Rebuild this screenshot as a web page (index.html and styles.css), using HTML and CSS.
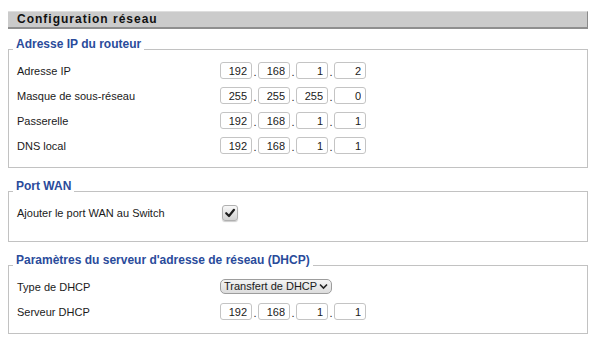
FILE: index.html
```html
<!DOCTYPE html>
<html lang="fr">
  <head>
    <meta charset="UTF-8" />
    <meta name="viewport" content="width=device-width, initial-scale=1.0" />
    <title>Configuration réseau</title>
    <link rel="stylesheet" href="styles.css">
  </head>
  <body>
    <main class="page">
      <h1 class="title">Configuration réseau</h1>

      <fieldset class="group">
        <legend>Adresse IP du routeur</legend>
        <div class="row">
          <label>Adresse IP</label>
          <div class="ip">
            <input type="text" value="192" /><span>.</span><input type="text" value="168" /><span>.</span><input type="text" value="1" /><span>.</span><input type="text" value="2" />
          </div>
        </div>
        <div class="row">
          <label>Masque de sous-réseau</label>
          <div class="ip">
            <input type="text" value="255" /><span>.</span><input type="text" value="255" /><span>.</span><input type="text" value="255" /><span>.</span><input type="text" value="0" />
          </div>
        </div>
        <div class="row">
          <label>Passerelle</label>
          <div class="ip">
            <input type="text" value="192" /><span>.</span><input type="text" value="168" /><span>.</span><input type="text" value="1" /><span>.</span><input type="text" value="1" />
          </div>
        </div>
        <div class="row">
          <label>DNS local</label>
          <div class="ip">
            <input type="text" value="192" /><span>.</span><input type="text" value="168" /><span>.</span><input type="text" value="1" /><span>.</span><input type="text" value="1" />
          </div>
        </div>
      </fieldset>

      <fieldset class="group">
        <legend>Port WAN</legend>
        <div class="row row-check">
          <label>Ajouter le port WAN au Switch</label>
          <span class="checkbox">
            <svg width="14" height="14" viewBox="0 0 14 14"><path d="M3.2 7.2 L6 10 L11 3.8" fill="none" stroke="#1e1e1e" stroke-width="2.2" stroke-linecap="round" stroke-linejoin="round"/></svg>
          </span>
        </div>
      </fieldset>

      <fieldset class="group">
        <legend>Paramètres du serveur d'adresse de réseau (DHCP)</legend>
        <div class="row">
          <label>Type de DHCP</label>
          <div class="select">
            <span>Transfert de DHCP</span>
            <svg width="9" height="7" viewBox="0 0 9 7"><path d="M1 1.5 L4.5 5 L8 1.5" fill="none" stroke="#222" stroke-width="1.6"/></svg>
          </div>
        </div>
        <div class="row">
          <label>Serveur DHCP</label>
          <div class="ip">
            <input type="text" value="192" /><span>.</span><input type="text" value="168" /><span>.</span><input type="text" value="1" /><span>.</span><input type="text" value="1" />
          </div>
        </div>
      </fieldset>
    </main>
  </body>
</html>
```

FILE: styles.css
```css
body {
  margin: 0;
  padding: 0;
  background-color: #fff;
  font-family: "Liberation Sans", Arial, sans-serif;
  color: #1a1a1a;
}
.page {
  padding: 11px 10px 0 8px;
}
.title {
  margin: 0;
  height: 15px;
  padding-left: 9px;
  background-color: #cbcbcb;
  border-top: 1px solid #dedede;
  border-right: 1px solid #8a8a8a;
  border-bottom: 2px solid #8f8f8f;
  font-size: 12px;
  line-height: 15px;
  font-weight: bold;
  letter-spacing: 1px;
  color: #111;
}
.group {
  margin: 8px 0 0;
  padding: 0 0 12px 8px;
  border: 1px solid #c2c2c2;
}
.group + .group {
  margin-top: 11px;
}
.group legend {
  margin-left: -4px;
  padding: 0 3px 10px;
  font-size: 12px;
  line-height: 14px;
  font-weight: bold;
  color: #2a4b9b;
}
.row {
  display: grid;
  grid-template-columns: 203px auto;
  align-items: center;
  height: 19px;
  margin-bottom: 6px;
  font-size: 11px;
}
.row:last-child {
  margin-bottom: 0;
}
.row-check,
.row-check:last-child {
  margin-bottom: 7px;
}
.ip {
  display: flex;
  align-items: flex-end;
}
.ip input {
  width: 32px;
  height: 17px;
  box-sizing: border-box;
  padding: 0 4px 0 0;
  border: 1px solid #c4c4c4;
  border-radius: 3px;
  font-family: "Liberation Sans", Arial, sans-serif;
  font-size: 11px;
  color: #1a1a1a;
  text-align: right;
  background-color: #fff;
}
.ip span {
  width: 6px;
  text-align: center;
  font-size: 11px;
  line-height: 13px;
}
.checkbox {
  display: flex;
  align-items: center;
  justify-content: center;
  width: 16px;
  height: 16px;
  margin-left: 2px;
  box-sizing: border-box;
  border: 1px solid #b0b0b0;
  border-radius: 3px;
  background: linear-gradient(#f8f8f8, #d2d2d2);
  box-shadow: 0 1px 1px rgba(0, 0, 0, 0.2);
}
.select {
  display: flex;
  align-items: center;
  justify-content: space-between;
  width: 112px;
  height: 15px;
  box-sizing: border-box;
  padding: 0 3px 0 3px;
  border: 1px solid #9d9d9d;
  border-radius: 5px;
  background: linear-gradient(#f4f4f4, #dcdcdc);
  font-size: 11px;
  line-height: 13px;
  white-space: nowrap;
  color: #1a1a1a;
}
.select svg {
  flex-shrink: 0;
}
```
